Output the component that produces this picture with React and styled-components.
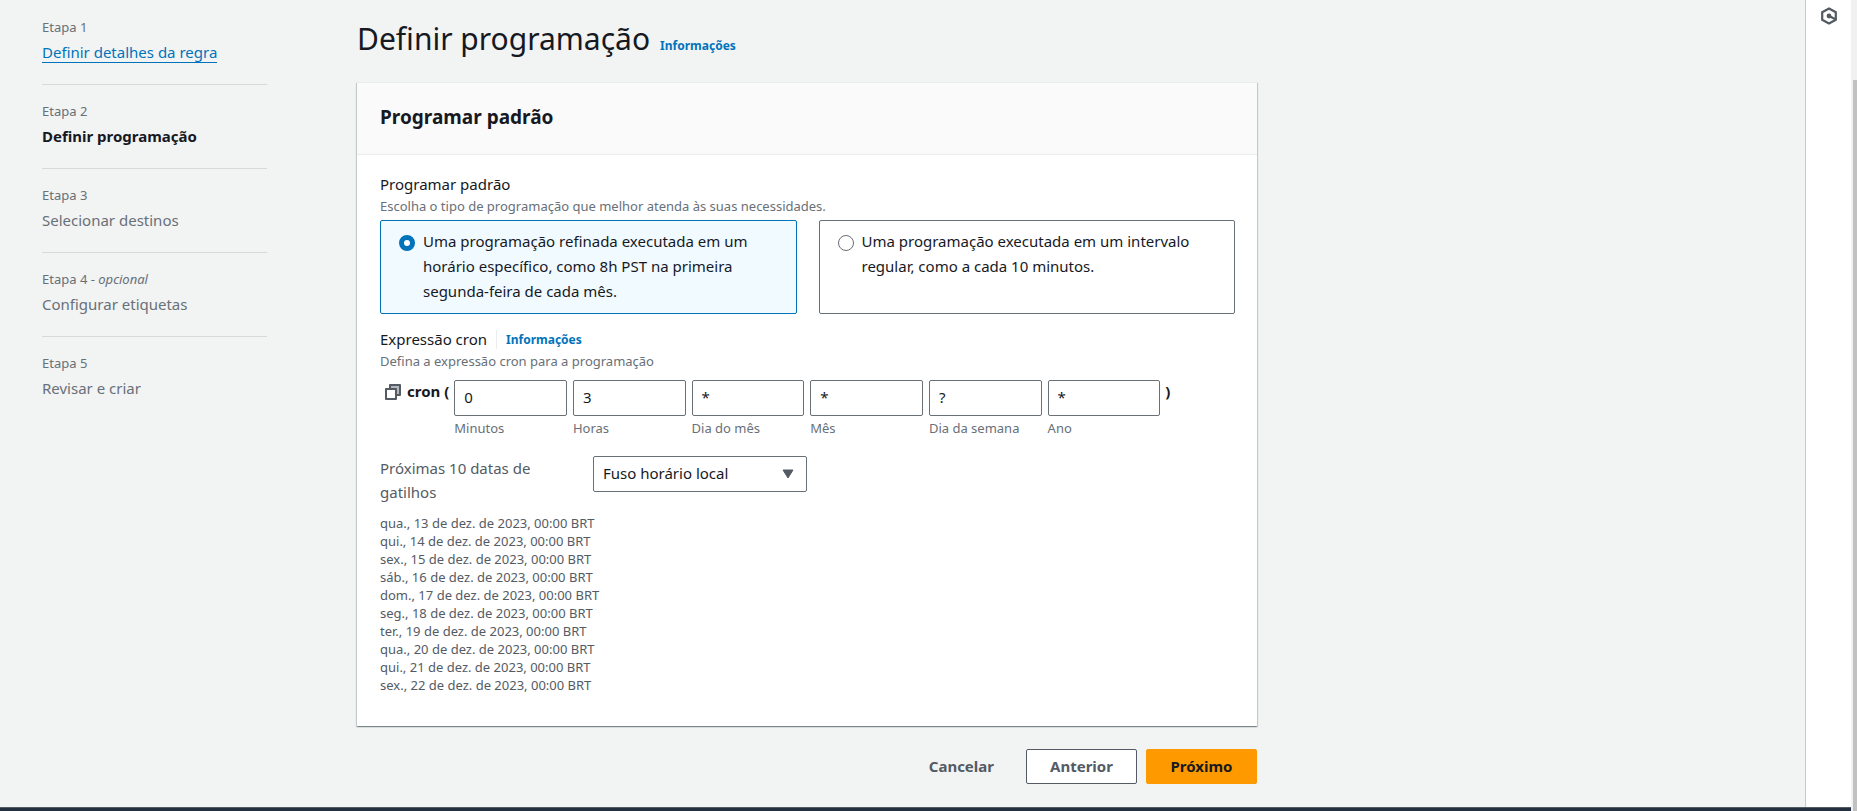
import React, { useState } from 'react';
import styled, { createGlobalStyle } from 'styled-components';

const GlobalStyle = createGlobalStyle`
  *, *::before, *::after { box-sizing: border-box; }
  body {
    margin: 0;
    background: #f2f3f3;
    color: #16191f;
    font-family: "Noto Sans", "Open Sans", sans-serif;
    font-size: 15px;
    line-height: 25px;
  }
  h1, h2, p, ol, ul, fieldset { margin: 0; padding: 0; border: 0; }
  ol, ul { list-style: none; }
  input, select, button { font: inherit; color: inherit; }
`;

const Shell = styled.div`
  display: flex;
  min-height: 100vh;
`;

const Workspace = styled.div`
  flex: 1;
  min-width: 0;
  display: flex;
  flex-direction: column;
`;

const Body = styled.div`
  flex: 1;
  display: flex;
`;

const Content = styled.div`
  flex: 1;
  min-width: 0;
  display: flex;
  align-items: flex-start;
  gap: 90px;
  padding: 0 42px 23px;
`;

const FooterBar = styled.footer`
  height: 4px;
  background: #232f3e;
  border-top: 1px solid #545b64;
`;

const ToolRail = styled.aside`
  flex: none;
  width: 46px;
  padding-top: 7px;
  display: flex;
  justify-content: center;
  align-items: flex-start;
  background: #fff;
  border-left: 1px solid #c4c9cc;
`;

const RailButton = styled.button`
  display: flex;
  padding: 0;
  border: 0;
  background: none;
  color: #545b64;
  cursor: pointer;
`;

const ScrollTrack = styled.div`
  flex: none;
  width: 6px;
  padding: 80px 0 0 2px;
  display: flex;
  background: #f1f1f1;
`;

const ScrollThumb = styled.div`
  flex: 1;
  background: #c1c1c1;
`;

const Steps = styled.ol`
  flex: none;
  width: 225px;
  padding-top: 16px;
`;

const Step = styled.li`
  padding-bottom: 18px;
  & + & {
    padding-top: 15px;
    border-top: 1px solid #d5dbdb;
  }
`;

const StepNumber = styled.p`
  font-size: 13px;
  line-height: 22px;
  color: #687078;
`;

const StepName = styled.p`
  line-height: 28px;
  font-weight: ${(p) => (p.$current ? 700 : 400)};
  color: ${(p) => (p.$current ? '#16191f' : '#687078')};
`;

const StepLink = styled.a`
  color: #0073bb;
  text-decoration: none;
  border-bottom: 1px solid #0073bb;
`;

const Main = styled.main`
  flex: 0 1 900px;
  min-width: 0;
`;

const TitleRow = styled.div`
  display: flex;
  align-items: baseline;
  gap: 10px;
  padding: 16px 0 21px;
`;

const PageTitle = styled.h1`
  font-size: 30px;
  line-height: 45px;
  font-weight: 400;
`;

const InfoLink = styled.a`
  font-size: 12px;
  line-height: 18px;
  font-weight: 700;
  color: #0073bb;
  text-decoration: none;
`;

const Panel = styled.section`
  background: #fff;
  border-top: 1px solid #eaeded;
  box-shadow: 0 1px 1px 0 rgba(0, 28, 36, 0.3), 1px 1px 1px 0 rgba(0, 28, 36, 0.15),
    -1px 1px 1px 0 rgba(0, 28, 36, 0.15);
`;

const PanelHeader = styled.header`
  padding: 20px 23px 23px;
  background: #fafafa;
  border-bottom: 1px solid #eaeded;
`;

const PanelTitle = styled.h2`
  font-size: 19px;
  line-height: 28px;
  font-weight: 700;
`;

const PanelBody = styled.div`
  padding: 17px 22px 32px 23px;
`;

const FieldLabel = styled.div`
  display: flex;
  align-items: center;
  line-height: 25px;
`;

const LabelDivider = styled.span`
  width: 1px;
  height: 19px;
  margin: 0 9px;
  background: #eaeded;
`;

const Hint = styled.p`
  font-size: 13px;
  line-height: 18px;
  color: #687078;
`;

const Tiles = styled.div`
  display: grid;
  grid-template-columns: 1fr 1fr;
  gap: 22px;
  padding: 5px 0 13px;
`;

const Tile = styled.label`
  display: flex;
  align-items: flex-start;
  gap: 8px;
  min-height: 94px;
  padding: 8px 40px 8px 18px;
  border: 1px solid ${(p) => (p.$selected ? '#0073bb' : '#687078')};
  border-radius: 2px;
  background: ${(p) => (p.$selected ? '#f1faff' : '#fff')};
  cursor: pointer;
`;

const Radio = styled.input`
  appearance: none;
  flex: none;
  width: 16px;
  height: 16px;
  margin: 6px 0 0;
  border: 1px solid #687078;
  border-radius: 50%;
  background: #fff;
  &:checked { border: 5px solid #0073bb; }
`;

const CronRow = styled.div`
  display: flex;
  align-items: flex-start;
  gap: 5px;
  padding: 10px 0 19px 4px;
`;

const CopyButton = styled.button`
  display: flex;
  padding: 3px 0 0;
  border: 0;
  background: none;
  cursor: pointer;
`;

const CronText = styled.strong`
  line-height: 23px;
`;

const CronFields = styled.div`
  flex: 0 1 706px;
  display: grid;
  grid-template-columns: repeat(6, 1fr);
  gap: 6px;
`;

const CronField = styled.label`
  display: flex;
  flex-direction: column;
  gap: 3px;
  min-width: 0;
  font-size: 13px;
  line-height: 18px;
  color: #687078;
`;

const TextInput = styled.input`
  width: 100%;
  height: 36px;
  padding: 0 9px 2px;
  border: 1px solid #687078;
  border-radius: 2px;
  background: #fff;
  font-size: 15px;
  color: #16191f;
`;

const TriggerRow = styled.div`
  display: flex;
  align-items: flex-start;
`;

const TriggerLabel = styled.label`
  width: 213px;
  padding-right: 40px;
  line-height: 24px;
  color: #545b64;
`;

const SelectBox = styled.span`
  display: grid;
  width: 214px;
  align-items: center;
`;

const Select = styled.select`
  grid-area: 1 / 1;
  appearance: none;
  width: 100%;
  height: 36px;
  padding: 0 34px 1px 9px;
  border: 1px solid #687078;
  border-radius: 2px;
  background: #fff;
`;

const SelectArrow = styled.svg`
  grid-area: 1 / 1;
  justify-self: end;
  margin-right: 13px;
  pointer-events: none;
`;

const DateList = styled.ul`
  padding-top: 10px;
  font-size: 13px;
  line-height: 18px;
  color: #545b64;
`;

const Actions = styled.div`
  display: flex;
  justify-content: flex-end;
  gap: 9px;
  padding-top: 23px;
`;

const looks = {
  plain: 'background: transparent; border-color: transparent; color: #545b64;',
  normal: 'background: #fff; border-color: #545b64; color: #545b64;',
  primary: 'background: #ff9900; border-color: #ff9900; color: #16191f;',
};

const Button = styled.button`
  height: 35px;
  padding: 0 22px;
  min-width: 111px;
  border: 1px solid;
  border-radius: 2px;
  font-weight: 700;
  cursor: pointer;
  ${(p) => looks[p.$look]}
`;

const steps = [
  { name: 'Definir detalhes da regra', link: true },
  { name: 'Definir programação', current: true },
  { name: 'Selecionar destinos' },
  { name: 'Configurar etiquetas', optional: true },
  { name: 'Revisar e criar' },
];

const patterns = [
  'Uma programação refinada executada em um horário específico, como 8h PST na primeira segunda-feira de cada mês.',
  'Uma programação executada em um intervalo regular, como a cada 10 minutos.',
];

const cronParts = [
  ['Minutos', '0'],
  ['Horas', '3'],
  ['Dia do mês', '*'],
  ['Mês', '*'],
  ['Dia da semana', '?'],
  ['Ano', '*'],
];

const dates = [
  'qua., 13', 'qui., 14', 'sex., 15', 'sáb., 16', 'dom., 17',
  'seg., 18', 'ter., 19', 'qua., 20', 'qui., 21', 'sex., 22',
];

function CopyIcon() {
  return (
    <svg width="18" height="18" viewBox="0 0 18 18" fill="none" stroke="#545b64" strokeWidth="2" strokeLinejoin="round">
      <rect x="6" y="2" width="10" height="10" fill="#b4b9be" />
      <rect x="2" y="6" width="10" height="10" fill="#fff" />
    </svg>
  );
}

function HexIcon() {
  return (
    <svg width="18" height="18" viewBox="0 0 18 18" fill="none" stroke="currentColor" strokeWidth="2.200">
      <path d="M9 1.500 15.800 5.200V12.800L9 16.500 2.200 12.800V5.200z" />
      <path d="M9 9l6.500 3.200" />
      <circle cx="9" cy="9" r="2.400" fill="currentColor" stroke="none" />
    </svg>
  );
}

export default function App() {
  const [pattern, setPattern] = useState(0);
  return (
    <Shell>
      <GlobalStyle />
      <Workspace>
        <Body>
          <Content>
            <Steps>
              {steps.map((s, i) => (
                <Step key={s.name}>
                  <StepNumber>
                    Etapa {i + 1}
                    {s.optional && <> - <em>opcional</em></>}
                  </StepNumber>
                  <StepName $current={s.current}>
                    {s.link ? <StepLink href="#detalhes">{s.name}</StepLink> : s.name}
                  </StepName>
                </Step>
              ))}
            </Steps>
            <Main>
              <TitleRow>
                <PageTitle>Definir programação</PageTitle>
                <InfoLink href="#info">Informações</InfoLink>
              </TitleRow>
              <Panel>
                <PanelHeader>
                  <PanelTitle>Programar padrão</PanelTitle>
                </PanelHeader>
                <PanelBody>
                  <div role="radiogroup" aria-labelledby="pattern-label">
                    <FieldLabel id="pattern-label">Programar padrão</FieldLabel>
                    <Hint>Escolha o tipo de programação que melhor atenda às suas necessidades.</Hint>
                    <Tiles>
                      {patterns.map((text, i) => (
                        <Tile key={text} $selected={pattern === i}>
                          <Radio
                            type="radio"
                            name="pattern"
                            checked={pattern === i}
                            onChange={() => setPattern(i)}
                          />
                          <span>{text}</span>
                        </Tile>
                      ))}
                    </Tiles>
                  </div>
                  <FieldLabel>
                    Expressão cron
                    <LabelDivider />
                    <InfoLink href="#cron">Informações</InfoLink>
                  </FieldLabel>
                  <Hint>Defina a expressão cron para a programação</Hint>
                  <CronRow>
                    <CopyButton type="button" aria-label="Copiar"><CopyIcon /></CopyButton>
                    <CronText>cron (</CronText>
                    <CronFields>
                      {cronParts.map(([label, value]) => (
                        <CronField key={label}>
                          <TextInput type="text" defaultValue={value} />
                          {label}
                        </CronField>
                      ))}
                    </CronFields>
                    <CronText>)</CronText>
                  </CronRow>
                  <TriggerRow>
                    <TriggerLabel htmlFor="zone">Próximas 10 datas de gatilhos</TriggerLabel>
                    <SelectBox>
                      <Select id="zone">
                        <option>Fuso horário local</option>
                      </Select>
                      <SelectArrow width="12" height="10" viewBox="0 0 12 10">
                        <path d="M1 1h10L6 9z" fill="#545b64" stroke="#545b64" strokeLinejoin="round" />
                      </SelectArrow>
                    </SelectBox>
                  </TriggerRow>
                  <DateList>
                    {dates.map((d) => (
                      <li key={d}>{d} de dez. de 2023, 00:00 BRT</li>
                    ))}
                  </DateList>
                </PanelBody>
              </Panel>
              <Actions>
                <Button type="button" $look="plain">Cancelar</Button>
                <Button type="button" $look="normal">Anterior</Button>
                <Button type="button" $look="primary">Próximo</Button>
              </Actions>
            </Main>
          </Content>
          <ToolRail>
            <RailButton type="button" aria-label="Ferramentas"><HexIcon /></RailButton>
          </ToolRail>
        </Body>
        <FooterBar />
      </Workspace>
      <ScrollTrack><ScrollThumb /></ScrollTrack>
    </Shell>
  );
}
